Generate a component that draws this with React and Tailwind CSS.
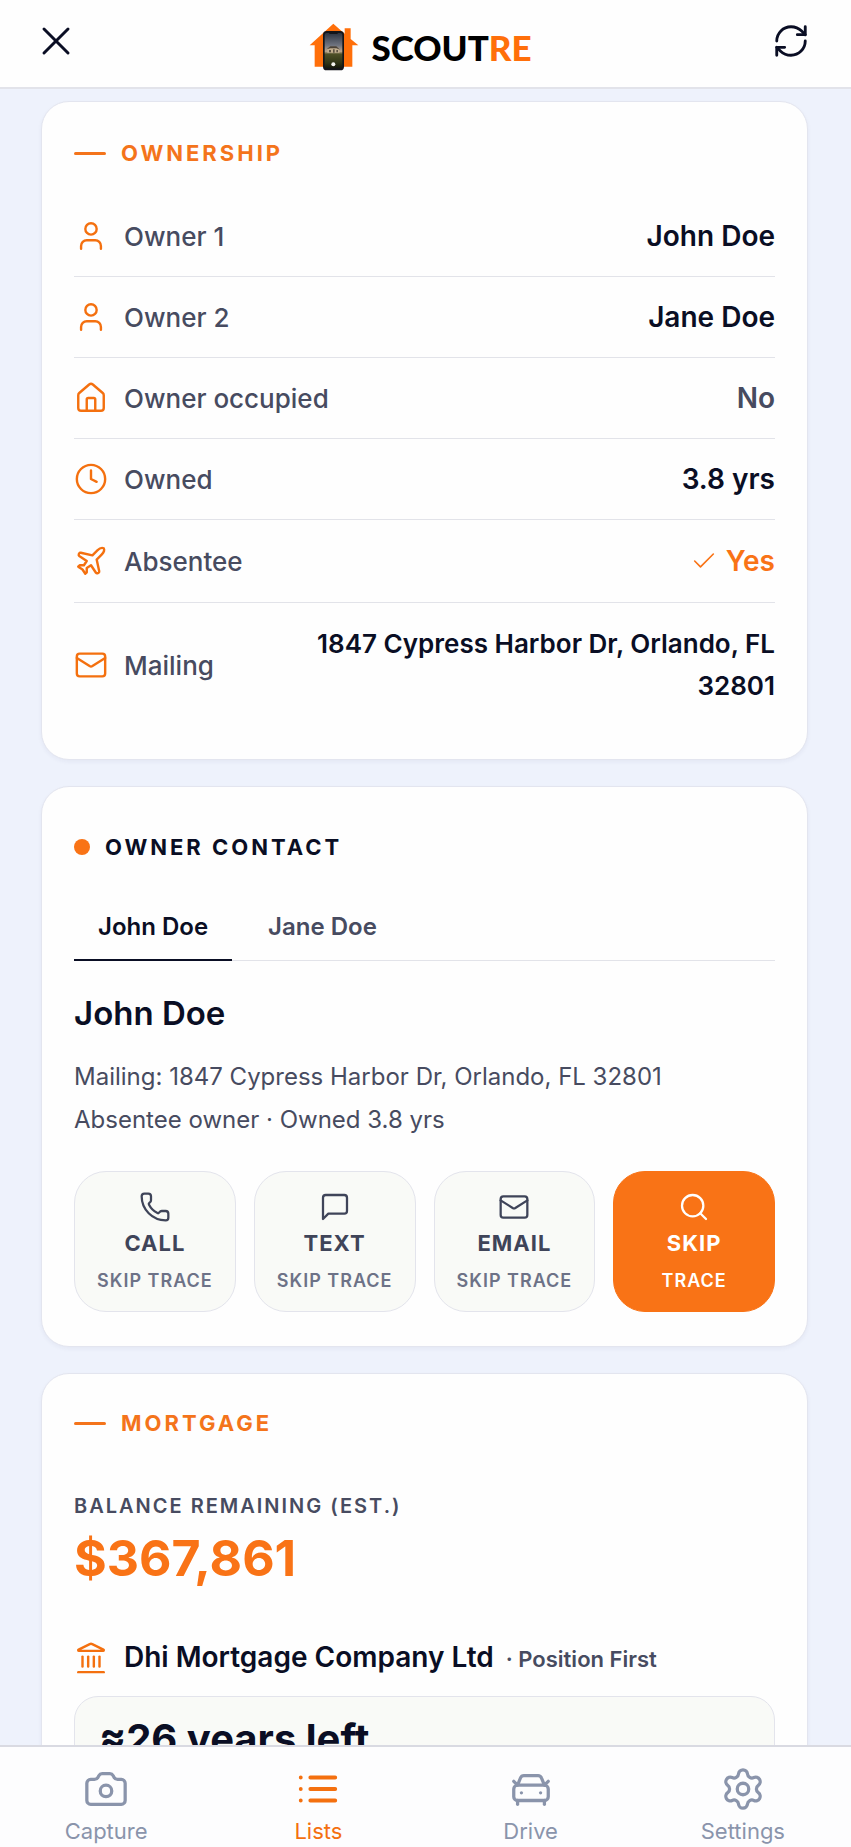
import { useState } from 'react'
import {
  Camera,
  CarFront,
  Check,
  Clock,
  House,
  Landmark,
  Mail,
  Phone,
  Plane,
  RefreshCw,
  Search,
  Settings,
  User,
  X,
} from 'lucide-react'

const OWNERSHIP = [
  { label: 'Owner 1', value: 'John Doe', icon: User },
  { label: 'Owner 2', value: 'Jane Doe', icon: User },
  { label: 'Owner occupied', value: 'No', icon: House, tone: 'muted' },
  { label: 'Owned', value: '3.8 yrs', icon: Clock },
  { label: 'Absentee', value: 'Yes', icon: Plane, tone: 'flag' },
  { label: 'Mailing', value: '1847 Cypress Harbor Dr, Orlando, FL 32801', icon: Mail, tone: 'address' },
]

const VALUE_TONES = {
  default: 'text-[28px] leading-10 text-[#0a0e24]',
  muted: 'text-[28px] leading-10 text-[#474b60]',
  flag: 'flex items-center gap-2 text-[28px] leading-[42px] text-[#f97316]',
  address: 'text-[26px] leading-[42px] text-[#0a0e24]',
}

const OWNERS = ['John Doe', 'Jane Doe']

function MessageIcon({ size, strokeWidth, className }) {
  return (
    <svg
      width={size}
      height={size}
      viewBox="0 0 24 24"
      fill="none"
      stroke="currentColor"
      strokeWidth={strokeWidth}
      strokeLinecap="round"
      strokeLinejoin="round"
      className={className}
      aria-hidden="true"
    >
      <path d="M21 15a2 2 0 0 1-2 2H7l-4 4V5a2 2 0 0 1 2-2h14a2 2 0 0 1 2 2z" />
    </svg>
  )
}

function ListIcon({ size, strokeWidth }) {
  return (
    <svg
      width={size}
      height={size}
      viewBox="0 0 24 24"
      fill="none"
      stroke="currentColor"
      strokeWidth={strokeWidth}
      strokeLinecap="round"
      aria-hidden="true"
    >
      <path d="M3 6h.01M3 12h.01M3 18h.01M8 6h13M8 12h13M8 18h13" />
    </svg>
  )
}

const ACTIONS = [
  { label: 'CALL', sub: 'SKIP TRACE', icon: Phone },
  { label: 'TEXT', sub: 'SKIP TRACE', icon: MessageIcon },
  { label: 'EMAIL', sub: 'SKIP TRACE', icon: Mail },
  { label: 'SKIP', sub: 'TRACE', icon: Search, primary: true },
]

const NAV = [
  { label: 'Capture', icon: Camera },
  { label: 'Lists', icon: ListIcon, active: true },
  { label: 'Drive', icon: CarFront },
  { label: 'Settings', icon: Settings },
]

function Logo() {
  return (
    <div className="flex items-center gap-3 pt-1.5 pr-1.5">
      <svg width="50" height="48" viewBox="0 0 150 144" aria-hidden="true">
        <defs>
          <linearGradient id="sky" x1="0" y1="0" x2="0" y2="1">
            <stop offset="0" stopColor="#2c3340" />
            <stop offset="0.35" stopColor="#6f7480" />
            <stop offset="0.52" stopColor="#b9a58c" />
            <stop offset="0.6" stopColor="#4d4f26" />
            <stop offset="0.85" stopColor="#2f3417" />
            <stop offset="1" stopColor="#14160d" />
          </linearGradient>
        </defs>
        <path d="M73 2 107 32V16h18v32l23 19h-18v64H17V67H2z" fill="#ff6f0a" />
        <rect x="42" y="24" width="63" height="118" rx="11" fill="#14151a" />
        <rect x="47" y="30" width="53" height="106" rx="6" fill="url(#sky)" />
        <path d="M60 24h27v5a4 4 0 0 1-4 4H64a4 4 0 0 1-4-4z" fill="#14151a" />
        <path d="M55 78l9-7h18l9 8v10H55z" fill="#c2ae8e" />
        <path d="M53 79l11-9h18l11 10-11-4H64z" fill="#4a4238" />
        <path d="M60 81h6v7h-6zM72 79h5v10h-5zM82 81h5v7h-5z" fill="#5d5344" />
        <circle cx="73" cy="124" r="6" fill="#f4f4f0" />
      </svg>
      <span className="font-['Lato',sans-serif] text-[35px] leading-10 font-black text-black">
        SCOUT<span className="text-[#ff6f0a]">RE</span>
      </span>
    </div>
  )
}

function Card({ className = '', children }) {
  return (
    <section
      className={`rounded-[28px] border border-[#e3e5ef] bg-[#fefefe] px-8 shadow-[0_2px_4px_rgba(30,40,90,0.05)] ${className}`}
    >
      {children}
    </section>
  )
}

function DashHeading({ children }) {
  return (
    <h2 className="flex items-center gap-[15px] text-[22px] leading-8 font-bold tracking-[3px] text-[#f4741b]">
      <span className="h-[3px] w-8 rounded-full bg-[#f4741b]" />
      {children}
    </h2>
  )
}

function OwnershipCard() {
  return (
    <Card className="pt-[35px] pb-8">
      <DashHeading>OWNERSHIP</DashHeading>
      <dl className="mt-[27px]">
        {OWNERSHIP.map(({ label, value, icon: Icon, tone = 'default' }) => (
          <div
            key={label}
            className="flex items-center justify-between gap-16 border-b border-[#e2e3e9] py-5 last:border-b-0"
          >
            <dt className="flex shrink-0 items-center gap-4 text-[26px] font-medium text-[#474b60]">
              <Icon size={34} strokeWidth={1.7} className="text-[#f4700f]" />
              {label}
            </dt>
            <dd className={`text-right font-semibold ${VALUE_TONES[tone]}`}>
              {tone === 'flag' && <Check size={28} strokeWidth={1.4} />}
              {value}
            </dd>
          </div>
        ))}
      </dl>
    </Card>
  )
}

function ContactCard() {
  const [owner, setOwner] = useState(OWNERS[0])

  return (
    <Card className="pt-11 pb-[34px]">
      <h2 className="flex items-center gap-[15px] text-[22px] leading-8 font-bold tracking-[3px] text-[#0a0e24]">
        <span className="size-4 rounded-full bg-[#f97316]" />
        OWNER CONTACT
      </h2>

      <div role="tablist" className="mt-8 flex gap-3 border-b border-[#e2e3e9]">
        {OWNERS.map((name) => (
          <button
            key={name}
            type="button"
            role="tab"
            aria-selected={owner === name}
            onClick={() => setOwner(name)}
            className={
              owner === name
                ? '-mb-px border-b-2 border-[#0a0e24] px-6 py-3.5 text-2xl leading-9 font-semibold text-[#0a0e24]'
                : '-mb-px border-b-2 border-transparent px-6 py-3.5 text-2xl leading-9 font-semibold text-[#474b60]'
            }
          >
            {name}
          </button>
        ))}
      </div>

      <h3 className="mt-8 text-[33px] leading-10 font-semibold text-[#0a0e24]">{owner}</h3>
      <p className="mt-[22px] text-2xl leading-[43px] text-[#474b60]">
        Mailing: 1847 Cypress Harbor Dr, Orlando, FL 32801
        <br />
        Absentee owner · Owned 3.8 yrs
      </p>

      <div className="mt-[30px] grid grid-cols-4 gap-[18px]">
        {ACTIONS.map(({ label, sub, icon: Icon, primary }) => (
          <button
            key={label}
            type="button"
            className={
              primary
                ? 'flex flex-col items-center rounded-[32px] border border-[#f97316] bg-[#f97316] pt-[19px] pb-4 text-white'
                : 'flex flex-col items-center rounded-[32px] border border-[#e3e4ec] bg-[#f9faf7] pt-[19px] pb-4 text-[#3f4459]'
            }
          >
            <Icon size={32} strokeWidth={1.7} />
            <span className="mt-1 text-[22px] leading-8 font-bold tracking-[1px]">{label}</span>
            <span
              className={
                primary
                  ? 'mt-2 text-lg leading-7 font-semibold tracking-[1px]'
                  : 'mt-2 text-lg leading-7 font-semibold tracking-[1px] text-[#6d7287]'
              }
            >
              {sub}
            </span>
          </button>
        ))}
      </div>
    </Card>
  )
}

function MortgageCard() {
  return (
    <Card className="pt-[33px] pb-8">
      <DashHeading>MORTGAGE</DashHeading>
      <p className="mt-[51px] text-xl leading-8 font-semibold tracking-[2px] text-[#474b60]">
        BALANCE REMAINING (EST.)
      </p>
      <p className="mt-2 text-[50px] leading-14 font-bold text-[#f97316]">$367,861</p>

      <div className="mt-[51px] flex items-center gap-4">
        <Landmark size={34} strokeWidth={1.7} className="text-[#f4700f]" />
        <p className="text-[28px] leading-10 font-semibold text-[#0a0e24]">
          Dhi Mortgage Company Ltd
          <span className="ml-3 text-[22px] text-[#474b60]">· Position First</span>
        </p>
      </div>

      <div className="mt-[17px] rounded-3xl border border-[#e3e4ec] bg-[#f9faf7] px-6 py-[18px]">
        <p className="text-[40px] leading-12 font-bold text-[#0a0e24]">≈26 years left</p>
      </div>
    </Card>
  )
}

export default function App() {
  return (
    <div className="flex h-screen flex-col bg-[#eef2fc] font-[Inter,'Liberation_Sans',sans-serif]">
      <header className="flex shrink-0 items-start justify-between border-b-2 border-[#e2e3ea] bg-[#fefefe] pt-[17px] pr-9 pb-4 pl-8 text-[#0a0e24]">
        <button type="button" aria-label="Close" className="flex size-12 items-center justify-center">
          <X size={48} strokeWidth={1.5} />
        </button>
        <Logo />
        <button type="button" aria-label="Refresh" className="flex size-12 items-center justify-center">
          <RefreshCw size={38} strokeWidth={1.8} />
        </button>
      </header>

      <main className="flex-1 overflow-y-auto pt-3 pr-[43px] pl-[41px] [scrollbar-width:none]">
        <div className="flex flex-col gap-[26px] pb-6">
          <OwnershipCard />
          <ContactCard />
          <MortgageCard />
        </div>
      </main>

      <nav className="grid shrink-0 grid-cols-4 border-t-2 border-[#d9dae2] bg-[#fdfdfe] pt-[19px] pr-0.5">
        {NAV.map(({ label, icon: Icon, active }) => (
          <a
            key={label}
            href={`#${label.toLowerCase()}`}
            aria-current={active ? 'page' : undefined}
            className={
              active
                ? 'flex flex-col items-center gap-[5px] pb-0.5 text-[22px] leading-7 text-[#f4700f]'
                : 'flex flex-col items-center gap-[5px] pb-0.5 text-[22px] leading-7 text-[#8a94ab]'
            }
          >
            <Icon size={46} strokeWidth={active ? 2 : 1.7} />
            {label}
          </a>
        ))}
      </nav>
    </div>
  )
}
